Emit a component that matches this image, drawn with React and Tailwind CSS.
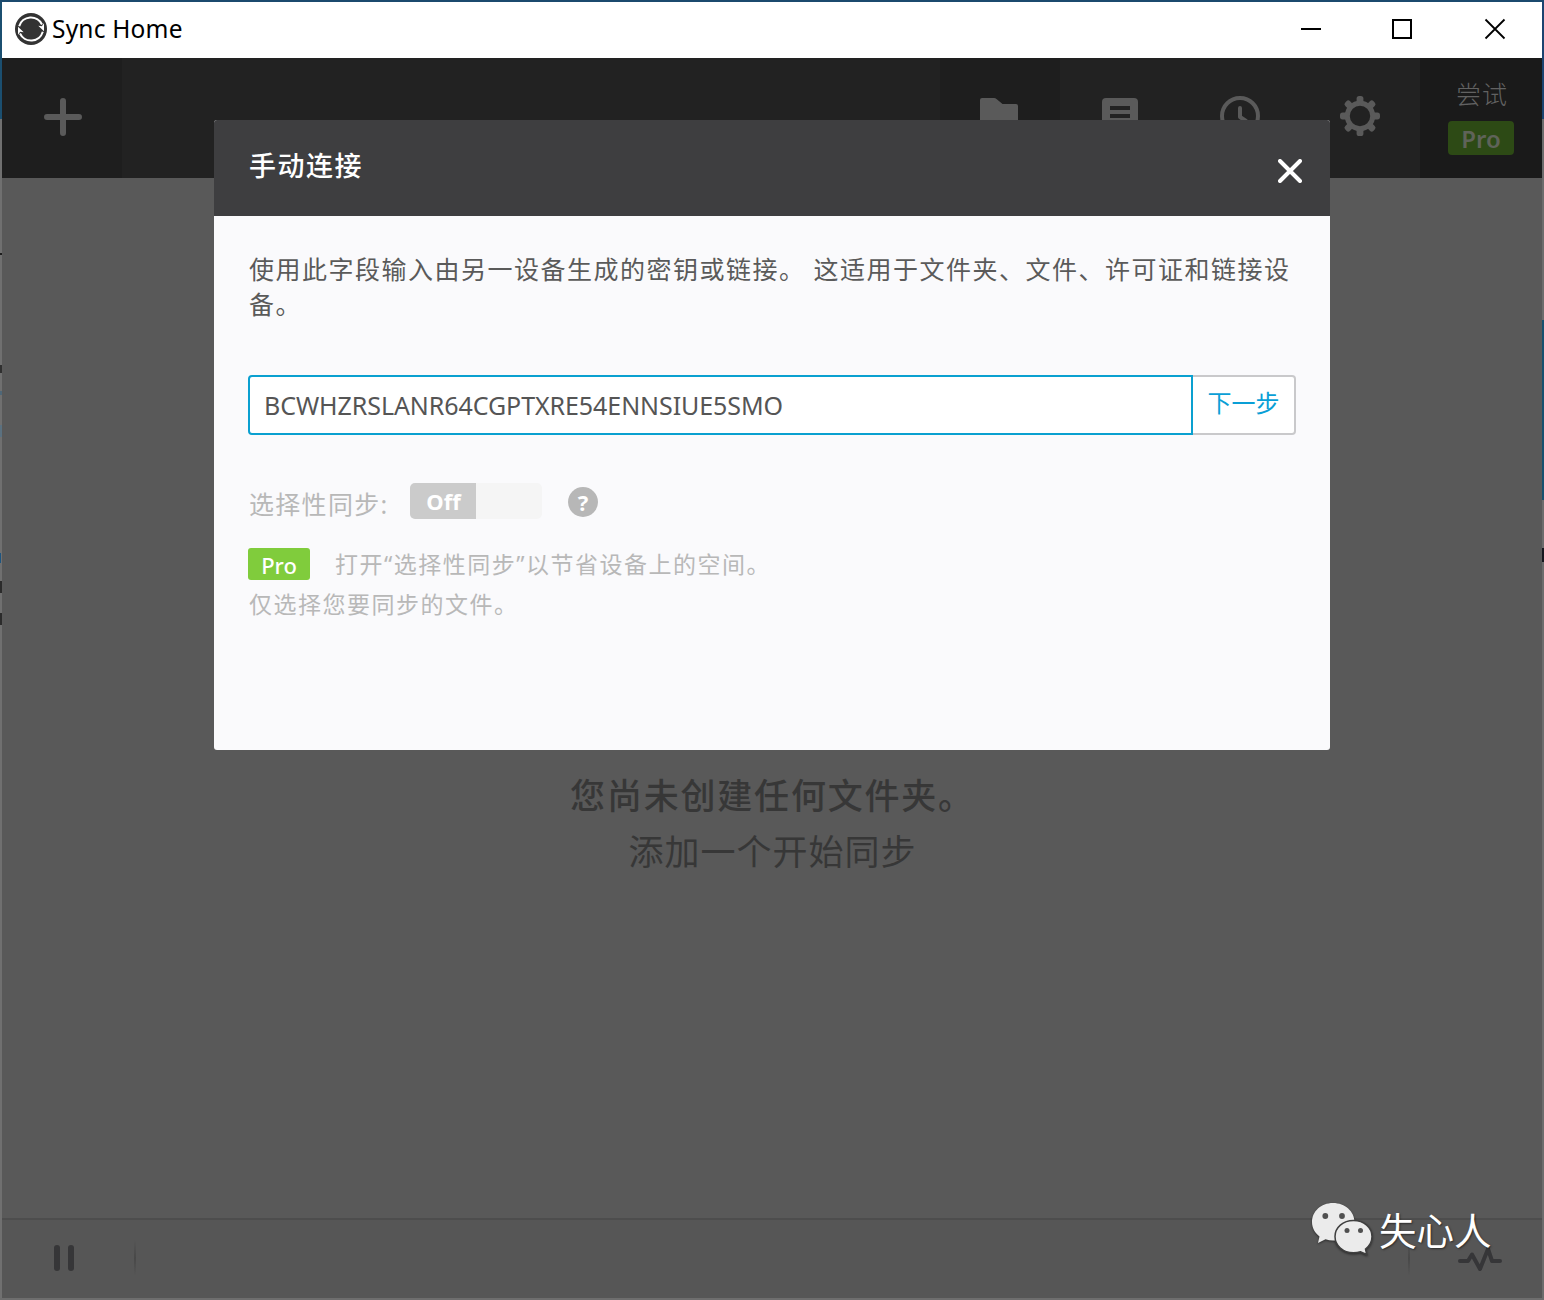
import React from 'react';

const GEAR_TEETH = [0, 45, 90, 135, 180, 225, 270, 315];

const SyncLogo = () => (
  <svg width="32" height="32" viewBox="0 0 32 32" fill="none">
    <circle cx="16" cy="16" r="16" fill="#333333" />
    <path d="M4.2 13.2A12.200 12.200 0 0 1 27 11.500" stroke="#ffffff" strokeWidth="2" />
    <path d="M27.800 18.800A12.200 12.200 0 0 1 5 20.500" stroke="#ffffff" strokeWidth="2" />
    <path d="M29 10.200V18.300L23.300 12.800L26.800 13.200Z" fill="#ffffff" />
    <path d="M3 21.800V13.700L8.700 19.200L5.200 18.800Z" fill="#ffffff" />
  </svg>
);

const PlusIcon = () => (
  <svg width="38" height="38" viewBox="0 0 38 38" stroke="#5a5a5a" strokeWidth="6" strokeLinecap="round">
    <path d="M19 3V35M3 19H35" />
  </svg>
);

const FolderIcon = () => (
  <svg width="40" height="40" viewBox="0 0 40 40" fill="#5a5a5a">
    <path d="M2 2H14Q15.5 2 16.500 3L22.500 8H36Q38 8 38 10V35Q38 37 36 37H2Q0 37 0 35V4Q0 2 2 2Z" />
  </svg>
);

const ListIcon = () => (
  <svg width="40" height="40" viewBox="0 0 40 40">
    <rect x="2" y="2" width="36" height="36" rx="4" fill="#5a5a5a" />
    <path d="M10 12H30M10 20H30M10 28H30" stroke="#222222" strokeWidth="4" />
  </svg>
);

const ClockIcon = () => (
  <svg width="40" height="40" viewBox="0 0 40 40" fill="none" stroke="#5a5a5a" strokeWidth="4">
    <circle cx="20" cy="20" r="18" />
    <path d="M20 12V21L26 25" strokeLinecap="round" strokeLinejoin="round" />
  </svg>
);

const GearIcon = () => (
  <svg width="40" height="40" viewBox="0 0 40 40" fill="none">
    <circle cx="20" cy="20" r="12.7" stroke="#5a5a5a" strokeWidth="5" />
    {GEAR_TEETH.map((angle) => (
      <rect key={angle} x="16.6" y="0" width="6.8" height="9" rx="2.6" fill="#5a5a5a" transform={`rotate(${angle} 20 20)`} />
    ))}
  </svg>
);

const WechatLogo = () => (
  <svg width="62" height="54" viewBox="0 0 62 54" className="drop-shadow-[0_1px_1px_rgba(0,0,0,0.5)]">
    <path
      d="M22 1C10 1 1 9.500 1 20C1 26 4 31 8.500 34.500L7 41L14.500 37.300C17 38.200 19.500 38.600 22 38.600C34 38.600 43.500 30.500 43.500 20C43.500 9.500 34 1 22 1Z"
      fill="#ebebeb"
    />
    <path
      d="M42.500 18.500C32 18.500 24 25.500 24 34.500C24 43.500 32 50.800 42.500 50.800C45 50.800 47.500 50.400 49.500 49.700L55.700 52.500L54.500 47C58.500 44 61 39.500 61 34.500C61 25.500 53 18.500 42.500 18.500Z"
      fill="#ebebeb"
      stroke="#3f3f3f"
      strokeWidth="1.500"
    />
    <g fill="#505050">
      <circle cx="14.300" cy="14" r="2.900" />
      <circle cx="31" cy="14" r="2.900" />
      <circle cx="36" cy="28.500" r="2.500" />
      <circle cx="49.500" cy="28.500" r="2.500" />
    </g>
  </svg>
);

const TitleBar = () => (
  <div className="flex h-14 shrink-0 items-center bg-white">
    <div className="flex flex-1 items-center gap-[5px] pb-0.5 pl-[13px]">
      <SyncLogo />
      <span className="text-[24.5px] leading-8 tracking-[0.2px] text-black">Sync Home</span>
    </div>
    <svg width="250" height="56" viewBox="0 0 250 56" fill="none" stroke="#000000" strokeWidth="2">
      <path d="M9 27H29" />
      <rect x="101" y="18" width="18" height="18" />
      <path d="M193.500 17.500L212.500 36.500M212.500 17.500L193.500 36.500" strokeWidth="1.800" />
    </svg>
  </div>
);

const Toolbar = () => (
  <div className="flex h-[120px] shrink-0 bg-[#222222]">
    <div className="flex w-[120px] items-center justify-center bg-[#1e1e1e] pb-0.5 pl-0.5">
      <PlusIcon />
    </div>
    <div className="flex-1" />
    <div className="flex w-[120px] justify-center bg-[#1e1e1e] pt-[38px]"><FolderIcon /></div>
    <div className="flex w-[120px] justify-center pt-[38px]"><ListIcon /></div>
    <div className="flex w-[120px] justify-center pt-[38px]"><ClockIcon /></div>
    <div className="flex w-[120px] justify-center pt-[38px]"><GearIcon /></div>
    <div className="flex w-[122px] flex-col items-center bg-[#1a1a1a] pt-[19px]">
      <span className="pl-0.5 text-[25px] leading-[34px] font-light tracking-[1px] text-[#626262]">尝试</span>
      <span className="mt-2.5 h-[34px] w-[66px] rounded-sm bg-[#2d4a15] text-center text-[24px] leading-9 font-semibold text-[#5f6359]">Pro</span>
    </div>
  </div>
);

const StatusBar = () => (
  <div className="flex h-20 shrink-0 items-center justify-between border-t-2 border-[#4d4d4d] bg-[#565656] pb-0.5">
    <div className="flex items-center">
      <div className="ml-[52px] flex gap-2">
        <div className="h-[26px] w-1.5 rounded-full bg-[#363638]" />
        <div className="h-[26px] w-1.5 rounded-full bg-[#363638]" />
      </div>
      <div className="ml-[60px] h-9 w-0.5 bg-linear-to-b from-transparent via-[#484848] to-transparent" />
    </div>
    <div className="flex items-center pr-10">
      <div className="mr-12 h-9 w-0.5 bg-linear-to-b from-transparent via-[#484848] to-transparent" />
      <svg width="44" height="26" viewBox="0 0 44 26" fill="none" stroke="#363638" strokeWidth="4" strokeLinecap="round" strokeLinejoin="round">
        <path d="M2 16H10L14 9.500L22 24L30 4L34 16H42" />
      </svg>
    </div>
  </div>
);

const ConnectDialog = () => {
  const [keyValue, setKeyValue] = React.useState('BCWHZRSLANR64CGPTXRE54ENNSIUE5SMO');

  return (
    <div className="absolute top-[120px] left-[214px] flex h-[630px] w-[1116px] flex-col overflow-hidden rounded-[3px] bg-[#fafafc]">
      <div className="flex h-24 shrink-0 items-start justify-between bg-[#3e3e40] pr-7 pl-[35px]">
        <h1 className="pt-[26px] text-[27px] leading-10 font-medium tracking-[1.5px] text-white">手动连接</h1>
        <button className="mt-[39px]">
          <svg width="24" height="24" viewBox="0 0 24 24" stroke="#ffffff" strokeWidth="4" strokeLinecap="round">
            <path d="M2 2L22 22M22 2L2 22" />
          </svg>
        </button>
      </div>

      <div className="flex flex-col px-[34px] pt-9">
        <p className="h-[70px] pl-px text-[25px] leading-[35px] tracking-[1.5px] whitespace-nowrap text-[#5a5a5a]">
          使用此字段输入由另一设备生成的密钥或链接。 这适用于文件夹、文件、许可证和链接设
          <br />
          备。
        </p>

        <div className="mt-[53px] flex h-[60px]">
          <input
            value={keyValue}
            onChange={(e) => setKeyValue(e.target.value)}
            className="w-[945px] rounded-l-[4px] border-2 border-[#0aa0d0] bg-white pt-0.5 pl-3.5 text-[25px] tracking-[-0.07px] text-[#555555] outline-none"
          />
          <button className="flex-1 rounded-r-[4px] border-2 border-l-0 border-[#c9c9cb] bg-white pb-1 text-[24px] text-[#0a9fd6]">
            下一步
          </button>
        </div>

        <div className="mt-12 flex h-9 items-center">
          <span className="w-[162px] pt-1.5 pl-px text-[25px] leading-8 tracking-[1.3px] whitespace-nowrap text-[#b8b8b8]">选择性同步:</span>
          <div className="flex h-9 w-[132px] overflow-hidden rounded-[5px] bg-[#f5f5f5]">
            <span className="w-[66px] bg-[#cbcbcb] pl-px text-center text-[22px] leading-9 font-bold text-white">Off</span>
          </div>
          <span className="mt-0.5 ml-[26px] flex size-[30px] items-center justify-center rounded-full bg-[#b7b7b7] text-[22px] font-bold text-white">?</span>
        </div>

        <div className="mt-[25px] text-[23px] leading-10 tracking-[1.5px] whitespace-nowrap text-[#b8b8b8]">
          <div className="flex h-10 items-center">
            <span className="mr-[25px] h-8 w-[62px] rounded-[3px] bg-[#80cc3c] text-center text-[22px] leading-[34px] font-medium tracking-normal text-white">Pro</span>
            <span>打开“选择性同步”以节省设备上的空间。</span>
          </div>
          <div className="pl-px">仅选择您要同步的文件。</div>
        </div>
      </div>
    </div>
  );
};

const App = () => {
  return (
    <div className="relative flex h-[1300px] w-[1544px] flex-col overflow-hidden bg-[#595959] font-['Noto_Sans','Noto_Sans_CJK_SC',sans-serif]">
      <div className="h-0.5 shrink-0 bg-[#1b4a6e]" />
      <div className="flex min-h-0 flex-1">
        {/* Strip of the desktop left of the window */}
        <div className="flex w-0.5 shrink-0 flex-col bg-[#707070]">
          <div className="h-[117px] bg-[#1b4f70]" />
          <div className="mt-[134px] h-0.5 bg-[#1c1c1c]" />
          <div className="mt-[110px] h-2 bg-[#303030]" />
          <div className="mt-[18px] h-1 bg-[#4e6778]" />
          <div className="mt-[30px] h-3 bg-[#5b7180]" />
          <div className="mt-[116px] h-2.5 w-px bg-[#1d5580]" />
          <div className="mt-[18px] h-3 bg-[#2b2b2b]" />
          <div className="mt-5 h-3 bg-[#2b2b2b]" />
        </div>

        <div className="flex min-w-0 flex-1 flex-col">
          <TitleBar />
          <Toolbar />
          <div className="flex flex-1 flex-col items-center pt-[590px] pl-px text-[#373737]">
            <p className="h-14 text-[35px] leading-[56px] font-medium tracking-[1.8px]">您尚未创建任何文件夹。</p>
            <p className="h-14 text-[35px] leading-[56px] font-normal tracking-[1px]">添加一个开始同步</p>
          </div>
          <StatusBar />
        </div>

        <div className="flex w-0.5 shrink-0 flex-col bg-[#6c6c6c]">
          <div className="h-[117px] bg-[#1c4470]" />
          <div className="mt-[201px] h-[180px] bg-[#16506f]" />
          <div className="mt-12 h-3.5 bg-[#16181f]" />
        </div>
      </div>
      <div className="h-0.5 shrink-0 bg-[#6e6e6e]" />

      <ConnectDialog />

      {/* Watermark */}
      <div className="absolute top-[1202px] left-[1311px] flex items-start gap-1.5">
        <WechatLogo />
        <span className="font-['Noto_Sans_CJK_SC',sans-serif] text-[37.5px] leading-[54px] font-normal whitespace-nowrap text-white [text-shadow:1px_1px_2px_rgba(0,0,0,0.5)]">失心人</span>
      </div>
    </div>
  );
};

export default App;
